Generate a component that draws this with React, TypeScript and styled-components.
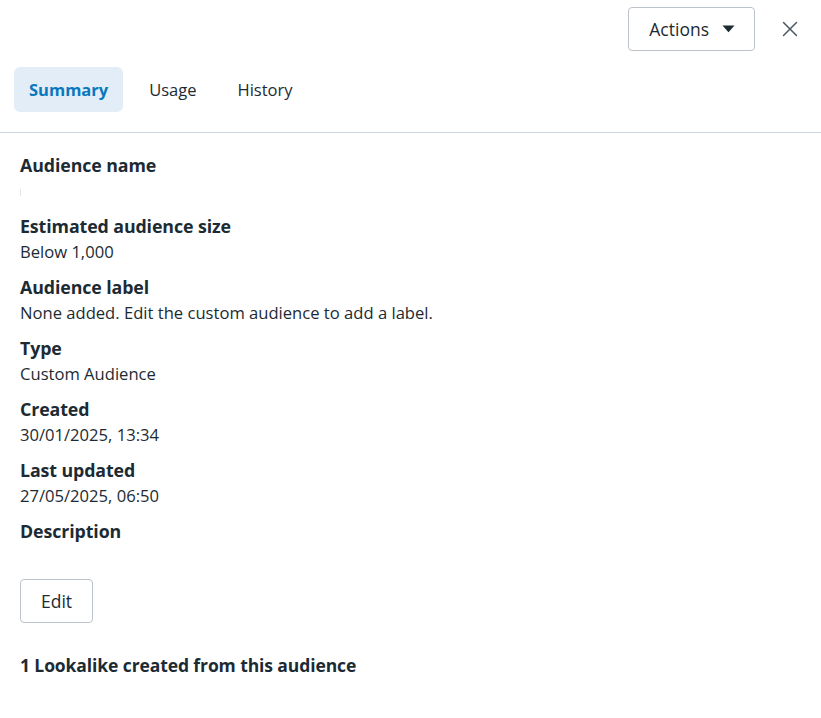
import React from 'react'
import styled, { createGlobalStyle } from 'styled-components'

const GlobalStyle = createGlobalStyle`
    body {
        margin: 0;
        background: #fff;
        font-family: 'Open Sans', 'Noto Sans', sans-serif;
        color: #1c2b33;
    }
`

const Panel = styled.div`
    width: 821px;
    height: 718px;
    background: #fff;
    overflow: hidden;
`

const TopBar = styled.div`
    display: flex;
    justify-content: flex-end;
    align-items: center;
    gap: 23px;
    padding: 7px 19px 0 0;
`

const OutlineButton = styled.button`
    height: 44px;
    padding: 0 19px 0 20px;
    display: inline-flex;
    align-items: center;
    gap: 13px;
    background: #fff;
    border: 1px solid #bcc3ca;
    border-radius: 4px;
    font-family: 'Open Sans', sans-serif;
    font-size: 17.5px;
    font-weight: 500;
    color: #1c2b33;
    cursor: pointer;
`

const CloseButton = styled.button`
    width: 24px;
    height: 24px;
    padding: 0;
    border: none;
    background: none;
    display: flex;
    align-items: center;
    justify-content: center;
    cursor: pointer;
`

const Tabs = styled.div`
    display: flex;
    gap: 11px;
    padding: 16px 14px 20px;
    border-bottom: 1px solid #cfd6dd;
`

const Tab = styled.div<{ active?: boolean }>`
    height: 45px;
    padding: 0 15px;
    display: flex;
    align-items: center;
    border-radius: 6px;
    font-size: 16.5px;
    font-weight: ${(p) => (p.active ? 700 : 400)};
    color: ${(p) => (p.active ? '#0a78be' : '#1c2b33')};
    background: ${(p) => (p.active ? '#e2edf8' : 'transparent')};
`

const Body = styled.div`
    padding: 19px 20px 0 20px;
`

const Field = styled.div`
    padding-bottom: 9px;
`

const Label = styled.div`
    font-size: 17.8px;
    font-weight: 700;
    line-height: 26px;
    letter-spacing: -0.1px;
`

const Value = styled.div`
    font-size: 16.6px;
    line-height: 26px;
    min-height: 26px;
`

const EmptyMark = styled.span`
    display: inline-block;
    width: 1px;
    height: 7px;
    background: #e4e8eb;
    vertical-align: middle;
`

const EditButton = styled(OutlineButton)`
    padding: 0 20px;
    font-size: 17.5px;
`

const Footer = styled.div`
    margin-top: 29px;
    font-size: 17.5px;
    font-weight: 700;
    line-height: 26px;
    letter-spacing: -0.1px;
`

const fields = [
    { label: 'Audience name', value: '' },
    { label: 'Estimated audience size', value: 'Below 1,000' },
    { label: 'Audience label', value: 'None added. Edit the custom audience to add a label.' },
    { label: 'Type', value: 'Custom Audience' },
    { label: 'Created', value: '30/01/2025, 13:34' },
    { label: 'Last updated', value: '27/05/2025, 06:50' },
    { label: 'Description', value: null },
]

const App: React.FC = (): JSX.Element => {
    return (
        <Panel>
            <GlobalStyle />
            <TopBar>
                <OutlineButton>
                    Actions
                    <svg width="13" height="8" viewBox="0 0 13 8">
                        <path d="M0.5 0.5h12L6.5 7.3z" fill="#1c2b33" />
                    </svg>
                </OutlineButton>
                <CloseButton aria-label="Close">
                    <svg width="16" height="16" viewBox="0 0 16 16">
                        <path d="M1.5 1.5l13 13M14.5 1.5l-13 13" stroke="#4b5860" strokeWidth="1.5" strokeLinecap="round" />
                    </svg>
                </CloseButton>
            </TopBar>
            <Tabs>
                <Tab active>Summary</Tab>
                <Tab>Usage</Tab>
                <Tab>History</Tab>
            </Tabs>
            <Body>
                {fields.map((f) => (
                    <Field key={f.label}>
                        <Label>{f.label}</Label>
                        <Value>{f.value === '' ? <EmptyMark /> : f.value}</Value>
                    </Field>
                ))}
                <EditButton>Edit</EditButton>
                <Footer>1 Lookalike created from this audience</Footer>
            </Body>
        </Panel>
    )
}

export default App
